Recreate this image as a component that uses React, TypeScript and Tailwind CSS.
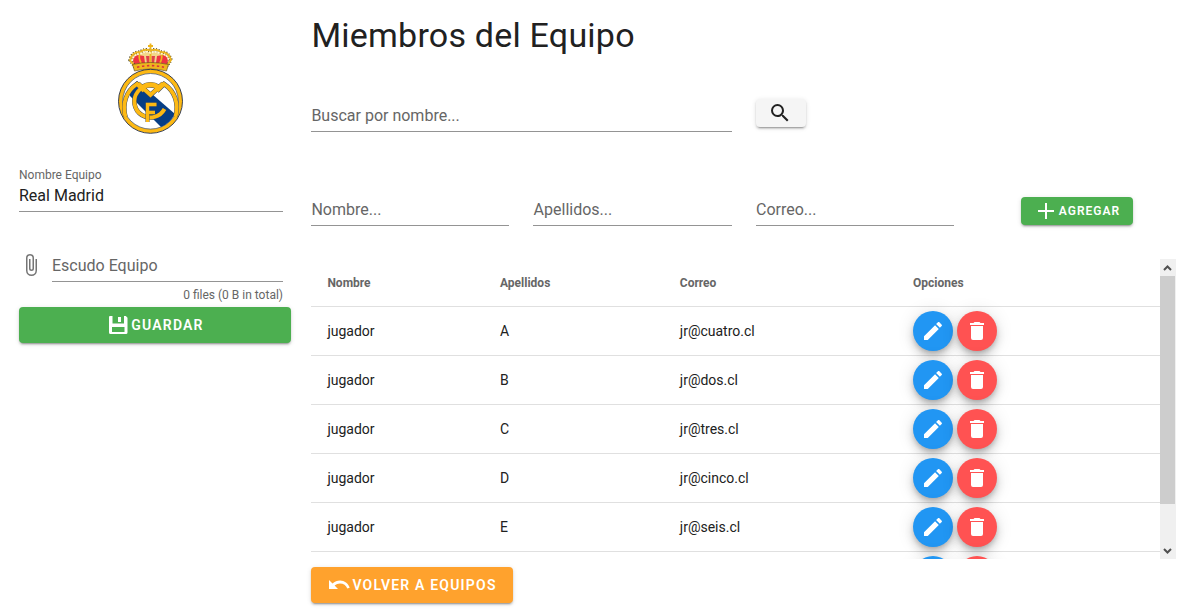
import React from "react";

const PENCIL = "M20.71,7.04C21.1,6.65 21.1,6 20.71,5.63L18.37,3.29C18,2.9 17.35,2.9 16.96,3.29L15.12,5.12L18.87,8.87M3,17.25V21H6.75L17.81,9.93L14.06,6.18L3,17.25Z";
const TRASH = "M19,4H15.5L14.5,3H9.5L8.5,4H5V6H19M6,19A2,2 0 0,0 8,21H16A2,2 0 0,0 18,19V7H6V19Z";
const SEARCH = "M9.5,3A6.5,6.5 0 0,1 16,9.5C16,11.11 15.41,12.59 14.44,13.73L14.71,14H15.5L20.5,19L19,20.5L14,15.5V14.71L13.73,14.44C12.59,15.41 11.11,16 9.5,16A6.5,6.5 0 0,1 3,9.5A6.5,6.5 0 0,1 9.5,3M9.5,5C7,5 5,7 5,9.5C5,12 7,14 9.5,14C12,14 14,12 14,9.5C14,7 12,5 9.5,5Z";
const CLIP = "M16.5,6V17.5A4,4 0 0,1 12.5,21.5A4,4 0 0,1 8.5,17.5V5A2.5,2.5 0 0,1 11,2.5A2.5,2.5 0 0,1 13.5,5V15.5A1,1 0 0,1 12.5,16.5A1,1 0 0,1 11.5,15.5V6H10V15.5A2.5,2.5 0 0,0 12.5,18A2.5,2.5 0 0,0 15,15.5V5A4,4 0 0,0 11,1A4,4 0 0,0 7,5V17.5A5.5,5.5 0 0,0 12.5,23A5.5,5.5 0 0,0 18,17.5V6H16.5Z";
const PLUS = "M4,11H11V4H13V11H20V13H13V20H11V13H4Z";
const FLOPPY = "M4,3H6.5V10.5H18V3H19.8L21.5,4.7V19.5A1.5,1.5 0 0,1 20,21H4.5A1.5,1.5 0 0,1 3,19.5V4A1,1 0 0,1 4,3ZM6,14V19H18.5V14ZM12,4H15V9H12Z";
const UNDO = "M2,7L5.5,10.5C7.7,8.7 10.2,7.5 13,7.5C17.5,7.5 21.3,10.4 22.7,14.7L20.3,15.5C19.2,12.3 16.5,10.4 13,10.4C11.1,10.4 9.2,11.2 7.6,12.6L11,16H2Z";

const SHADOW =
  "shadow-[0_3px_1px_-2px_rgba(0,0,0,0.2),0_2px_2px_0_rgba(0,0,0,0.14),0_1px_5px_0_rgba(0,0,0,0.12)]";
const FAB_SHADOW =
  "shadow-[0_3px_5px_-1px_rgba(0,0,0,0.2),0_6px_10px_0_rgba(0,0,0,0.14),0_1px_18px_0_rgba(0,0,0,0.12)]";

function Icon({ d, className = "size-6" }: { d: string; className?: string }) {
  return (
    <svg viewBox="0 0 24 24" fill="currentColor" fillRule="evenodd" className={`shrink-0 ${className}`}>
      <path d={d} />
    </svg>
  );
}

const MONOGRAM =
  "M7.5 74C4 61 8 48 19 41L26 48M57.5 74C61 61 57 48 46 41L39 48M20 40.5L32.5 52L45 40.5M43 46.5A16 16 0 1 0 46.5 66M24 44Q32.5 38.5 41 44";

function Crest() {
  return (
    <svg viewBox="0 0 66 92" className="h-[92px] w-[66px]">
      <path d="M17 26L12 17Q14 10 22 9Q28 8 32.5 9Q37 8 43 9Q51 10 53 17L48 26Z" fill="#f2d68a" />
      <path d="M16 21Q13 14 20 12L26 13L27 20ZM49 21Q52 14 45 12L39 13L38 20Z" fill="#ee3342" />
      <path d="M28 13H31.5V21H29ZM37 13H33.5V21H36Z" fill="#e0404a" />
      <path d="M17 24L12 17Q14 9 22 9Q28 5 32.5 8Q37 5 43 9Q51 9 53 17L48 24" fill="none" stroke="#46401f" strokeWidth="3.4" strokeDasharray="1 1.6" />
      <path d="M17 24L12 17Q14 9 22 9Q28 5 32.5 8Q37 5 43 9Q51 9 53 17L48 24M32.5 0.5V22M30 3H35M22 10Q20 14 23 20M43 10Q45 14 42 20" fill="none" stroke="#edb51f" strokeWidth="1.8" />
      <path d="M14 18Q15 11 23 10.5Q28 7.5 32.5 10Q37 7.5 42 10.5Q50 11 51 18" fill="none" stroke="#fff6d8" strokeWidth="1.8" strokeDasharray="1.6 1.4" />
      <path d="M14.5 21.5Q32.5 17.5 50.5 21.5L48.5 28Q32.5 24 16.5 28Z" fill="#efb51e" stroke="#594718" strokeWidth=".6" />
      <path d="M19 24.2Q32.5 21 46 24.2" fill="none" stroke="#d8343a" strokeWidth="1.6" strokeDasharray="2.4 2.6" />
      <circle cx="32.5" cy="58.3" r="32" fill="#fdb913" stroke="#25304a" strokeWidth=".9" />
      <circle cx="32.5" cy="58.3" r="27.8" fill="#fff" stroke="#52617b" strokeWidth=".8" />
      <path d="M12 44L19 38L57 71Q51 81 43 84L12 53Z" fill="#073e85" />
      <g fill="none">
        <path d={MONOGRAM} stroke="#3c4860" strokeWidth="4.6" />
        <path d={MONOGRAM} stroke="#fdb913" strokeWidth="3.8" />
        <path d="M29.5 79V61.5H38.5M28 69.5H37" stroke="#3c4860" strokeWidth="4" />
        <path d="M29.5 79V61.5H38.5M28 69.5H37" stroke="#fdb913" strokeWidth="3.3" />
      </g>
    </svg>
  );
}

function Field({ text, className }: { text: string; className: string }) {
  return (
    <div className={`h-8 shrink-0 border-b border-[#949494] pt-1 text-base leading-6 text-[#666] ${className}`}>
      {text}
    </div>
  );
}

const players = [
  ["jugador", "A", "jr@cuatro.cl"],
  ["jugador", "B", "jr@dos.cl"],
  ["jugador", "C", "jr@tres.cl"],
  ["jugador", "D", "jr@cinco.cl"],
  ["jugador", "E", "jr@seis.cl"],
  ["", "", ""],
];

const COLUMNS = "grid grid-cols-[172.6px_179.8px_233.2px_1fr] items-center pl-[16.4px]";

export default function App() {
  return (
    <div className="flex h-[615px] w-[1195px] overflow-hidden bg-white font-['Roboto',sans-serif] text-[#212121]">
      <aside className="ml-[19px] flex w-[272px] shrink-0 flex-col pt-[43px]">
        <div className="flex h-[92px] justify-center pr-2"><Crest /></div>
        <div className="mt-8 h-[45px] w-[264px] border-b border-[#949494]">
          <div className="h-[17px] text-xs leading-4 text-[#666]">Nombre Equipo</div>
          <div className="text-base leading-6">Real Madrid</div>
        </div>
        <div className="mt-[38px] flex w-[264px]">
          <Icon d={CLIP} className="mt-[3px] size-6 text-[#757575]" />
          <Field text="Escudo Equipo" className="ml-[9px] grow" />
        </div>
        <div className="mt-1.5 h-[19px] w-[264px] text-right text-xs leading-[14px] text-[#666]">0 files (0 B in total)</div>
        <button className={`flex h-9 items-center justify-center rounded bg-[#4caf50] text-sm font-semibold tracking-[1.2px] text-white ${SHADOW}`}>
          <Icon d={FLOPPY} className="mr-px size-6" />
          GUARDAR
        </button>
      </aside>

      <main className="ml-5 flex w-[866px] flex-col">
        <h1 className="mt-[11px] h-12 pl-[0.4px] text-[34px] leading-[48px] tracking-[0.22px]">Miembros del Equipo</h1>
        <div className="mt-[39px] flex h-[34px]">
          <Field text="Buscar por nombre..." className="mt-0.5 w-[421px] pl-[0.4px]" />
          <button className={`ml-6 mt-px flex h-7 w-[50px] items-center justify-center rounded bg-[#f5f5f5] pr-0.5 ${SHADOW}`}>
            <Icon d={SEARCH} />
          </button>
        </div>
        <div className="mt-[62px] flex h-8 items-start">
          <Field text="Nombre..." className="w-[198px] pl-[0.4px]" />
          <Field text="Apellidos..." className="ml-6 w-[199px] pl-[0.6px]" />
          <Field text="Correo..." className="ml-6 w-[198px]" />
          <button className={`ml-[67px] mt-[3px] flex h-7 w-28 items-center justify-center rounded bg-[#4caf50] text-xs font-semibold tracking-[1px] text-white ${SHADOW}`}>
            <Icon d={PLUS} className="mr-px size-6" />
            AGREGAR
          </button>
        </div>

        <div className="mt-[33px] flex h-[300px] overflow-hidden">
          <div className="w-[849px] shrink-0 overflow-hidden">
            <div className={`h-12 border-b border-[#e0e0e0] text-xs font-bold text-[#666] ${COLUMNS}`}>
              <span>Nombre</span><span>Apellidos</span><span>Correo</span><span>Opciones</span>
            </div>
            {players.map(([name, surname, email], index) => (
              <div key={index} className={`h-[49px] border-b border-[#e0e0e0] text-sm ${COLUMNS}`}>
                <span>{name}</span><span>{surname}</span><span>{email}</span>
                <span className="flex gap-1">
                  <button className={`flex size-10 items-center justify-center rounded-full bg-[#2196f3] text-white ${FAB_SHADOW}`}><Icon d={PENCIL} /></button>
                  <button className={`flex size-10 items-center justify-center rounded-full bg-[#ff5252] text-white ${FAB_SHADOW}`}><Icon d={TRASH} /></button>
                </span>
              </div>
            ))}
          </div>
          <div className="flex w-4 flex-col bg-[#f0f0f0] text-[#505050]">
            <svg viewBox="0 0 16 17" className="h-[17px] w-4"><path d="M4 11L7.5 7.5L11 11" fill="none" stroke="currentColor" strokeWidth="2" /></svg>
            <div className="h-[228px] w-[15px] bg-[#cdcdcd]" />
            <svg viewBox="0 0 16 17" className="mt-auto h-[17px] w-4"><path d="M4 7L7.5 10.5L11 7" fill="none" stroke="currentColor" strokeWidth="2" /></svg>
          </div>
        </div>

        <button className={`mt-2 flex h-9 w-[202px] shrink-0 items-center justify-center rounded bg-[#ffa22d] text-sm font-semibold tracking-[1.2px] text-white ${SHADOW}`}>
          <Icon d={UNDO} className="mr-px size-6" />
          VOLVER A EQUIPOS
        </button>
      </main>
    </div>
  );
}
